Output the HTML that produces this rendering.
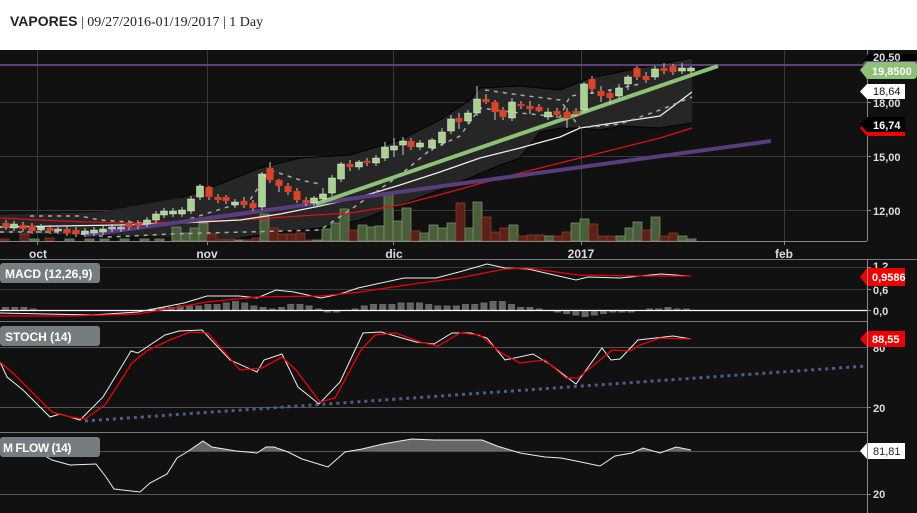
<!DOCTYPE html>
<html><head><meta charset="utf-8">
<style>
html,body{margin:0;padding:0;width:917px;height:513px;overflow:hidden;background:#111;}
#hdr{position:absolute;left:0;top:0;width:917px;height:50px;background:#fff;}
#ttl{position:absolute;left:10px;top:13px;font-size:14px;color:#222;white-space:nowrap;}
#ttl b{font-family:"Liberation Sans",sans-serif;font-weight:bold;}
#ttl span{font-family:"Liberation Serif",serif;}
svg{position:absolute;left:0;top:0;}
text{font-family:"Liberation Sans",sans-serif;}
</style></head><body>
<div id="hdr"><div id="ttl"><b>VAPORES</b><span> | 09/27/2016-01/19/2017 | 1 Day</span></div></div>
<svg id="s" width="917" height="513" viewBox="0 0 917 513">
<defs><clipPath id="mfc"><rect x="0" y="400" width="867" height="51"/></clipPath></defs>
<rect x="0" y="50" width="917" height="463" fill="#111"/>
<g stroke="#3a3a3a" stroke-width="1">
<line x1="0" y1="102.5" x2="867" y2="102.5"/><line x1="0" y1="156.5" x2="867" y2="156.5"/><line x1="0" y1="210.5" x2="867" y2="210.5"/>
<line x1="37.5" y1="50" x2="37.5" y2="241"/><line x1="207.5" y1="50" x2="207.5" y2="241"/><line x1="393.5" y1="50" x2="393.5" y2="241"/><line x1="581.5" y1="50" x2="581.5" y2="241"/><line x1="784.5" y1="50" x2="784.5" y2="241"/>
</g>
<polygon fill="#262626" points="0,215 100,212 180,198 210,188 260,168 300,158 350,155 400,140 440,120 470,100 480,88 520,86 560,90 590,78 630,70 660,64 692,58 692,123 660,128 620,126 600,130 580,128 560,128 540,132 520,158 500,165 470,178 440,190 400,205 360,220 320,228 280,232 240,238 200,238 150,236 100,235 50,234 0,233"/>
<polyline fill="none" stroke="#000" stroke-width="1" points="180,198 210,188 260,168 300,158 350,155 400,140 440,120 470,100 480,88 520,86 560,90 590,78 630,70 660,64 692,58"/>
<polyline fill="none" stroke="#000" stroke-width="1" points="692,123 660,128 620,126 600,130 580,128 560,128 540,132 520,158 500,165 470,178 440,190 400,205 360,220 320,228 280,232 240,238"/>
<g id="vol"></g>
<polyline fill="none" stroke="#e01010" stroke-width="1.3" points="0,218 60,221 120,223 180,222 240,220 300,216 350,213 400,205 450,192 500,178 540,168 580,158 620,148 660,138 692,128"/>
<polyline fill="none" stroke="#eee" stroke-width="1.3" points="0,227 60,226 120,225 180,223 240,220 280,214 320,206 360,197 400,185 440,172 480,158 520,148 560,137 580,128 620,122 660,116 692,92"/>
<polyline fill="none" stroke="#aaa" stroke-width="1.5" stroke-dasharray="4,5" points="30,216 80,216 100,220 170,225 250,200 270,170 300,180 320,184"/>
<polyline fill="none" stroke="#aaa" stroke-width="1.5" stroke-dasharray="4,5" points="0,232 60,232 110,237 170,234 320,230 350,210 400,175 430,150 460,136 480,108 520,113 560,117 570,96 600,92 640,84"/>
<polyline fill="none" stroke="#aaa" stroke-width="1.5" stroke-dasharray="4,5" points="485,90 520,95 560,100 580,128 620,124 660,110 692,97"/>
<line x1="0" y1="65" x2="862" y2="65" stroke="#5e3f80" stroke-width="2"/>
<line x1="86" y1="235" x2="771" y2="141" stroke="#5a3d7e" stroke-width="4"/>
<line x1="316" y1="204" x2="718" y2="66" stroke="#8dc276" stroke-width="4"/>
<g id="cdl"></g>
<line x1="867.5" y1="50" x2="867.5" y2="241" stroke="#888"/>
<line x1="0" y1="241.5" x2="867" y2="241.5" stroke="#888"/>
<g stroke="#888"><line x1="37.5" y1="241" x2="37.5" y2="245"/><line x1="207.5" y1="241" x2="207.5" y2="245"/><line x1="393.5" y1="241" x2="393.5" y2="245"/><line x1="581.5" y1="241" x2="581.5" y2="245"/><line x1="784.5" y1="241" x2="784.5" y2="245"/>
<line x1="867" y1="102.5" x2="871" y2="102.5"/><line x1="867" y1="156.5" x2="871" y2="156.5"/><line x1="867" y1="210.5" x2="871" y2="210.5"/></g>
<g fill="#ddd" font-size="12" font-weight="bold" text-anchor="middle">
<text x="38" y="258">oct</text><text x="207" y="258">nov</text><text x="394" y="258">dic</text><text x="581" y="258">2017</text><text x="784" y="258">feb</text></g>
<g fill="#ddd" font-size="11" font-weight="bold">
<text x="873" y="107">18,00</text><text x="873" y="161">15,00</text><text x="873" y="215">12,00</text></g>
<path d="M868,54 h55 v8 h-60 z" fill="#000"/><text x="873" y="61" fill="#ddd" font-size="11" font-weight="bold">20,50</text>
<path d="M865,61 h58 v5 h-62 z" fill="#6a4a8e"/>
<path d="M867,62 L913,62 Q917,62 917,66 L917,75 Q917,79 913,79 L867,79 L860,70 Z" fill="#8dc276"/>
<text x="872" y="75" fill="#fff" font-size="11" font-weight="bold">19,8500</text>
<path d="M867,84 L905,84 L905,99 L867,99 L860,91.5 Z" fill="#fff"/>
<text x="873" y="95" fill="#111" font-size="11">18,64</text>
<path d="M867,120 L905,120 L905,136 L867,136 L860,128 Z" fill="#e00"/>
<path d="M867,117 L905,117 L905,132 L867,132 L860,124.5 Z" fill="#000"/>
<text x="873" y="129" fill="#fff" font-size="11" font-weight="bold">16,74</text>
<line x1="0" y1="259.5" x2="917" y2="259.5" stroke="#777"/>
<g stroke="#3a3a3a"><line x1="0" y1="267.5" x2="867" y2="267.5"/><line x1="0" y1="289.5" x2="867" y2="289.5"/></g>
<g id="hist"></g>
<line x1="0" y1="310.5" x2="867" y2="310.5" stroke="#fff" stroke-width="1.3"/>
<line x1="0" y1="321.5" x2="867" y2="321.5" stroke="#777"/>
<polyline fill="none" stroke="#eee" stroke-width="1" points="0,313 92,315 138,312 184,303 207,296 239,296 257,298 276,290 294,292 321,298 340,294 358,288 404,278 436,278 459,272 487,264 505,268 528,269 576,280 588,277 620,278 661,274 689,276"/>
<polyline fill="none" stroke="#e00" stroke-width="1.3" points="0,316 70,316 138,314 207,302 257,297 321,296 360,292 413,284 459,278 505,269 528,268 578,275 643,276 691,276"/>
<rect x="0" y="263" width="100" height="20" rx="3" fill="#767d80"/>
<text x="5" y="278" fill="#fff" font-size="12" font-weight="bold">MACD (12,26,9)</text>
<g stroke="#888"><line x1="867" y1="267.5" x2="871" y2="267.5"/><line x1="867" y1="289.5" x2="871" y2="289.5"/><line x1="867" y1="310.5" x2="871" y2="310.5"/></g>
<g fill="#ddd" font-size="11" font-weight="bold"><text x="873" y="270">1,2</text><text x="873" y="294">0,6</text><text x="873" y="315">0,0</text></g>
<path d="M867,268 L905,268 L905,286 L867,286 L860,277 Z" fill="#e00"/>
<text x="872" y="281" fill="#fff" font-size="11" font-weight="bold">0,9586</text>
<g stroke="#555"><line x1="0" y1="347.5" x2="867" y2="347.5"/><line x1="0" y1="407.5" x2="867" y2="407.5"/></g>
<line x1="0" y1="432.5" x2="867" y2="432.5" stroke="#777"/>
<line x1="85" y1="421" x2="867" y2="366" stroke="#4a5d8e" stroke-width="3" stroke-dasharray="3,4"/>
<polyline fill="none" stroke="#eee" stroke-width="1" points="0,362 7,377 23,390 50,417 60,414 80,420 103,397 131,351 138,353 165,335 179,331 202,330 230,360 257,372 264,360 282,354 298,387 319,404 340,382 363,333 381,332 416,342 434,344 452,333 471,333 487,338 505,360 533,354 551,365 576,384 602,348 611,360 620,359 638,340 673,336 691,339"/>
<polyline fill="none" stroke="#e00" stroke-width="1.3" points="0,362 15,375 30,390 52,412 70,417 85,419 105,405 132,363 148,350 170,340 190,332 208,333 240,370 262,368 282,357 296,370 320,402 335,398 361,350 375,335 396,333 420,342 438,346 460,333 480,335 500,352 520,363 545,360 566,378 578,378 600,360 612,350 630,351 640,345 660,338 691,339"/>
<rect x="0" y="326" width="100" height="20" rx="3" fill="#767d80"/>
<text x="5" y="341" fill="#fff" font-size="12" font-weight="bold">STOCH (14)</text>
<g stroke="#888"><line x1="867" y1="407.5" x2="871" y2="407.5"/></g>
<g fill="#ddd" font-size="11" font-weight="bold"><text x="873" y="352">80</text><text x="873" y="412">20</text></g>
<path d="M867,331 L905,331 L905,347 L867,347 L860,339 Z" fill="#e00"/>
<text x="872" y="343" fill="#fff" font-size="11" font-weight="bold">88,55</text>
<g stroke="#555"><line x1="0" y1="451.5" x2="867" y2="451.5"/><line x1="0" y1="494.5" x2="867" y2="494.5"/></g>
<polygon clip-path="url(#mfc)" fill="#666" points="0,451 40,453 52,460 70,465 96,464 106,477 114,489 140,492 150,483 167,474 177,458 187,452 203,441 212,447 236,451 257,453 266,447 274,447 288,452 302,459 328,467 345,452 362,449 383,444 400,441 412,439 434,440 452,440 482,440 497,446 520,453 545,457 561,458 576,461 600,466 615,456 632,453 643,448 660,453 676,447 691,450 691,451 0,451"/>
<polyline fill="none" stroke="#eee" stroke-width="1" points="40,453 52,460 70,465 96,464 106,477 114,489 140,492 150,483 167,474 177,458 187,452 203,441 212,447 236,451 257,453 266,447 274,447 288,452 302,459 328,467 345,452 362,449 383,444 400,441 412,439 434,440 452,440 482,440 497,446 520,453 545,457 561,458 576,461 600,466 615,456 632,453 643,448 660,453 676,447 691,450"/>
<rect x="0" y="437" width="100" height="20" rx="3" fill="#767d80"/>
<text x="3" y="452" fill="#fff" font-size="12" font-weight="bold" letter-spacing="-0.5">M FLOW (14)</text>
<g stroke="#888"><line x1="867" y1="494.5" x2="871" y2="494.5"/></g>
<g fill="#ddd" font-size="11" font-weight="bold"><text x="873" y="498">20</text></g>
<path d="M867,443 L905,443 L905,459 L867,459 L860,451 Z" fill="#fff"/>
<text x="873" y="455" fill="#222" font-size="11">81,81</text>
<line x1="867.5" y1="259" x2="867.5" y2="513" stroke="#888"/>
</svg>
<script>
var NS="http://www.w3.org/2000/svg";
function el(p,t,a){var e=document.createElementNS(NS,t);for(var k in a)e.setAttribute(k,a[k]);p.appendChild(e);return e;}
var C=[[6,223,227,'r'],[14,224,228,'g'],[23,225,229,'r'],[32,226,231,'r'],[41,227,230,'g'],[50,228,231,'r'],[58,229,231,'w'],[67,229,233,'r'],[76,230,234,'r'],[85,231,234,'g'],[94,230,233,'g'],[103,229,232,'g'],[112,227,229,'w'],[121,227,229,'w'],[129,223,227,'r'],[138,223,226,'r'],[147,220,224,'g'],[156,214,220,'g'],[164,211,215,'g'],[173,211,214,'g'],[182,210,214,'g'],[191,199,211,'g',196],[200,186,197,'g',184],[209,187,197,'r',186,200],[218,197,200,'r'],[226,197,201,'r',195,204],[235,202,205,'g',199],[244,201,205,'r',197],[253,203,208,'r'],[262,174,207,'g',172],[270,168,180,'r',162],[279,180,186,'r',179,192],[288,186,192,'r'],[297,191,200,'r'],[306,200,203,'r'],[314,198,203,'g',196],[323,194,199,'g',188],[332,178,193,'g',175],[341,164,179,'g',162],[350,164,167,'r',160,171],[359,162,167,'g',160],[367,161,163,'r'],[376,158,163,'g',155],[385,147,158,'g',142],[394,146,150,'g',138,157],[403,141,145,'g',137,155],[411,141,147,'r',138],[420,143,147,'g',140],[432,140,148,'g',138],[442,132,143,'g',128],[451,119,131,'g',115],[459,118,122,'r',113,129],[468,113,121,'g'],[477,99,113,'g',86],[486,99,102,'r',94,104],[495,102,112,'r',100,120],[503,110,117,'r'],[512,102,118,'g',98],[521,104,106,'r'],[530,106,109,'r',101,114],[539,107,111,'r',104,112],[548,112,117,'g',108],[557,111,115,'r',108],[567,112,118,'r',108,128],[576,111,114,'r',108],[584,84,110,'g',82],[592,79,89,'r',76,94],[601,91,96,'r',86,102],[610,93,98,'r',90,104],[619,88,96,'g',84],[628,77,84,'g',75,90],[637,68,77,'r',66],[646,76,80,'r',72,83],[655,69,77,'g',66],[664,68,71,'r',63],[673,66,72,'r',64],[682,68,71,'g',63],[691,68,71,'g',66]];
var g=document.getElementById('cdl');
C.forEach(function(c){var col=c[3]=='g'?'#a8d28f':(c[3]=='r'?'#d9452a':'#aaa');
var wt=c[4]||c[1]-3,wb=c[5]||c[2]+3;
el(g,'line',{x1:c[0],x2:c[0],y1:wt,y2:wb,stroke:'#ccc','stroke-width':1});
el(g,'rect',{x:c[0]-3.5,y:c[1],width:7,height:Math.max(2,c[2]-c[1]),fill:col,stroke:c[3]=='r'?'#b02818':'#fff','stroke-width':0.4});});
var V=[[0,239,'r'],[20,234,'r'],[30,239,'g'],[45,238,'r'],[65,239,'g'],[85,239,'g'],[100,239,'g'],[120,239,'g'],[140,239,'g'],[155,239,'g'],[172,237,'g'],[181,237,'g'],[190,239,'g'],[200,239,'g'],[172,227,'g'],[181,233,'g'],[190,228,'g'],[199,223,'g'],[207,234,'r'],[217,239,'r'],[226,239,'r'],[235,240,'g'],[243,240,'r'],[252,238,'r'],[260,214,'g'],[269,228,'r'],[278,234,'r'],[287,234,'r'],[296,233,'r'],[305,240,'r'],[313,240,'g'],[322,229,'g'],[331,223,'g'],[340,209,'g'],[349,230,'r'],[358,225,'g'],[367,227,'g'],[375,226,'g'],[384,194,'g'],[393,221,'g'],[402,208,'g'],[411,231,'r'],[420,233,'g'],[429,225,'g'],[438,228,'g'],[447,223,'g'],[456,203,'r'],[465,228,'g'],[473,202,'g'],[482,217,'r'],[491,232,'r'],[500,228,'r'],[509,225,'g'],[518,236,'r'],[527,235,'r'],[536,235,'r'],[545,236,'g'],[554,236,'r'],[562,232,'r'],[571,223,'g'],[580,219,'g'],[589,224,'r'],[598,236,'r'],[607,236,'r'],[616,236,'g'],[625,228,'g'],[633,222,'g'],[642,230,'r'],[651,217,'g'],[660,236,'r'],[669,233,'r'],[678,236,'g'],[687,239,'g']];
var vg=document.getElementById('vol');
V.forEach(function(v){el(vg,'rect',{x:v[0],y:v[1],width:9,height:241-v[1],fill:v[2]=='g'?'#4a5e3c':'#5a2218',stroke:v[2]=='g'?'#7f9c6b':'#9a3a2a','stroke-width':0.7});});
var H=[2,2,2,1,0,0,0,0,0,0,0,0,0,0,0,0,1,2,2,3,3,3,4,4,5,6,5,3,2,1,2,4,4,3,1,-1,-1,0,1,3,4,4,4,5,5,5,4,3,3,3,4,4,5,6,6,4,2,2,1,0,-1,-2,-3,-4,-3,-2,-1,-1,-1,0,1,1,2,1,1];
var hg=document.getElementById('hist');
H.forEach(function(h,i){var x=2+i*9.2;if(h>0)el(hg,'rect',{x:x,y:310-h*1.5,width:7,height:h*1.5,fill:'#666'});else if(h<0)el(hg,'rect',{x:x,y:311,width:7,height:-h*1.5,fill:'#666'});});
</script>
</body></html>
